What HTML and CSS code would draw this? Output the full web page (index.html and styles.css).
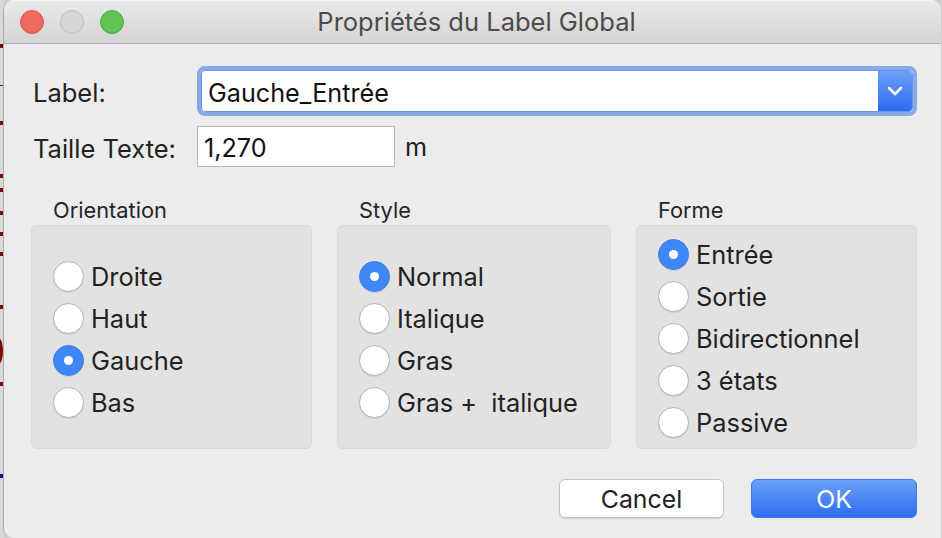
FILE: index.html
```html
<!DOCTYPE html>
<html lang="fr">
<head>
<meta charset="utf-8">
<title>Propriétés du Label Global</title>
<link rel="stylesheet" href="styles.css">
</head>
<body>
<div class="desk">
  <span class="mark m1"></span>
  <span class="hline"></span>
  <span class="mark m2"></span>
  <span class="mark m3"></span>
  <span class="mark m4"></span>
  <span class="mark m5"></span>
  <span class="mark m6"></span>
  <span class="mark m7"></span>
  <span class="mark m8"></span>
  <span class="arc"></span>
  <span class="mark m9"></span>
  <span class="mark blue"></span>
</div>
<div class="window">
  <header class="titlebar">
    <div class="lights">
      <span class="light red"></span>
      <span class="light grey"></span>
      <span class="light green"></span>
    </div>
    <h1 class="title">Propriétés du Label Global</h1>
  </header>
  <main class="content">
    <div class="fields">
      <label class="flabel">Label:</label>
      <div class="combo">
        <div class="combo-inner">
          <span class="combo-text">Gauche_Entrée</span>
          <span class="combo-btn">
            <svg width="16" height="10" viewBox="0 0 16 10"><path d="M2 2 L8 8 L14 2" fill="none" stroke="#fff" stroke-width="2.6" stroke-linecap="round" stroke-linejoin="round"/></svg>
          </span>
        </div>
      </div>
      <label class="flabel">Taille Texte:</label>
      <div class="sizerow">
        <span class="textbox">1,270</span>
        <span class="unit">m</span>
      </div>
    </div>
    <div class="groups">
      <section class="group">
        <h2 class="gtitle">Orientation</h2>
        <div class="gbox">
          <div class="radio"><span class="dot"></span>Droite</div>
          <div class="radio"><span class="dot"></span>Haut</div>
          <div class="radio"><span class="dot on"></span>Gauche</div>
          <div class="radio"><span class="dot"></span>Bas</div>
        </div>
      </section>
      <section class="group">
        <h2 class="gtitle">Style</h2>
        <div class="gbox">
          <div class="radio"><span class="dot on"></span>Normal</div>
          <div class="radio"><span class="dot"></span>Italique</div>
          <div class="radio"><span class="dot"></span>Gras</div>
          <div class="radio"><span class="dot"></span>Gras +&nbsp; italique</div>
        </div>
      </section>
      <section class="group">
        <h2 class="gtitle">Forme</h2>
        <div class="gbox five">
          <div class="radio"><span class="dot on"></span>Entrée</div>
          <div class="radio"><span class="dot"></span>Sortie</div>
          <div class="radio"><span class="dot"></span>Bidirectionnel</div>
          <div class="radio"><span class="dot"></span>3 états</div>
          <div class="radio"><span class="dot"></span>Passive</div>
        </div>
      </section>
    </div>
    <div class="buttons">
      <button class="btn cancel">Cancel</button>
      <button class="btn ok">OK</button>
    </div>
  </main>
</div>
</body>
</html>
```
FILE: styles.css
```css
* { box-sizing: border-box; }
html, body {
  margin: 0;
  padding: 0;
  width: 942px;
  height: 538px;
  overflow: hidden;
}
body {
  background: #cfcfcf;
  font-family: Inter, "Liberation Sans", sans-serif;
  color: #222;
  position: relative;
}
.desk {
  position: absolute;
  left: 0;
  top: 0;
  width: 4px;
  height: 538px;
  background: #d8d8d8;
}
.mark {
  position: absolute;
  left: 0;
  width: 4px;
  height: 4px;
  background: #7c0a0a;
}
.m1 { top: 44px; }
.m2 { top: 121px; }
.m3 { top: 174px; }
.m4 { top: 188px; }
.m5 { top: 211px; }
.m6 { top: 232px; }
.m7 { top: 252px; }
.m8 { top: 305px; }
.m9 { top: 382px; }
.blue { top: 474px; background: #1010a8; }
.hline {
  position: absolute;
  left: 0;
  top: 85px;
  width: 4px;
  height: 1px;
  background: #333;
}
.arc {
  position: absolute;
  left: -6px;
  top: 338px;
  width: 9px;
  height: 26px;
  border: 3px solid #7c0a0a;
  border-radius: 50%;
}
.window {
  margin-left: 3px;
  width: 938px;
  height: 538px;
  background: #ececec;
  border-left: 1px solid #a9a9a9;
  border-radius: 10px 10px 0 10px;
  display: flex;
  flex-direction: column;
  overflow: hidden;
  position: relative;
  z-index: 1;
}
.titlebar {
  height: 44px;
  flex: none;
  background: linear-gradient(#e9e9e9, #d4d4d4);
  border-bottom: 1px solid #b3b3b3;
  border-top: 1px solid #f4f4f4;
  display: flex;
  align-items: center;
  position: relative;
}
.lights {
  display: flex;
  gap: 16px;
  padding-left: 16px;
}
.light {
  width: 24px;
  height: 24px;
  border-radius: 50%;
}
.red { background: #ee6a5f; border: 1px solid #d9544a; }
.grey { background: #d6d6d6; border: 1px solid #bcbcbc; }
.green { background: #5fc454; border: 1px solid #4aa73f; }
.title {
  position: absolute;
  left: 0;
  right: 0;
  top: 0;
  bottom: 0;
  margin: 0;
  display: flex;
  align-items: center;
  justify-content: center;
  font-size: 25.5px;
  font-weight: 400;
  color: #4b4b4b;
  padding: 0 0 1px 8px;
}
.content {
  flex: 1;
  display: flex;
  flex-direction: column;
  padding: 22px 24px 0 26px;
}
.fields {
  display: grid;
  grid-template-columns: 167px 720px;
  row-gap: 10px;
  align-items: center;
}
.flabel {
  font-size: 25.5px;
  color: #222;
  padding: 3px 0 0 3px;
}
.combo {
  height: 50px;
  border: 4px solid #87a8e9;
  border-radius: 8px;
}
.combo-inner {
  height: 100%;
  border: 1px solid #6f92de;
  border-radius: 4px;
  display: flex;
  overflow: hidden;
  background: #fff;
}
.combo-text {
  flex: 1;
  font-size: 25.2px;
  color: #111;
  padding: 4px 0 0 6px;
  display: flex;
  align-items: center;
}
.combo-btn {
  width: 34px;
  background: linear-gradient(#6da0f7, #2a6bf0);
  display: flex;
  align-items: center;
  justify-content: center;
  border-radius: 0 3px 3px 0;
}
.sizerow {
  display: flex;
  align-items: center;
  gap: 10px;
}
.textbox {
  width: 198px;
  height: 41px;
  background: #fff;
  border: 1px solid #b9b9b9;
  font-size: 25.2px;
  color: #111;
  padding: 2px 0 0 6px;
  display: flex;
  align-items: center;
}
.unit {
  font-size: 25.2px;
  color: #222;
}
.groups {
  display: flex;
  gap: 25px;
  margin-top: 30px;
  padding-left: 1px;
}
.group {
  display: flex;
  flex-direction: column;
}
.group:nth-child(1) { width: 282px; }
.group:nth-child(2) { width: 275px; }
.group:nth-child(3) { width: 282px; }
.gtitle {
  margin: 0 0 5px 22px;
  font-size: 21.8px;
  font-weight: 400;
  color: #262626;
  height: 23px;
  line-height: 23px;
  padding-top: 2px;
}
.gbox {
  height: 224px;
  background: #e2e2e2;
  border: 1px solid #d9d9d9;
  border-radius: 6px;
  display: flex;
  flex-direction: column;
  justify-content: center;
  padding: 4px 0 0 21px;
}
.gbox.five { padding-top: 2px; }
.radio {
  height: 42px;
  display: flex;
  align-items: center;
  gap: 7px;
  font-size: 25.4px;
  color: #222;
}
.dot {
  width: 31px;
  height: 31px;
  border-radius: 50%;
  background: #fff;
  border: 1px solid #b4b4b4;
  box-shadow: 0 1px 1px rgba(0,0,0,0.08);
  flex: none;
  position: relative;
}
.dot.on {
  background: #3f86f6;
  border-color: #3a7ff0;
}
.dot.on::after {
  content: "";
  position: absolute;
  left: 10px;
  top: 10px;
  width: 9px;
  height: 9px;
  border-radius: 50%;
  background: #fff;
}
.buttons {
  display: flex;
  justify-content: flex-end;
  gap: 27px;
  margin-top: 30px;
  padding-right: 0;
}
.btn {
  height: 39px;
  font-family: Inter, "Liberation Sans", sans-serif;
  font-size: 24.8px;
  border-radius: 6px;
  padding: 0;
}
.cancel {
  width: 165px;
  background: #fff;
  color: #222;
  border: 1px solid #c4c4c4;
  box-shadow: 0 1px 1px rgba(0,0,0,0.12);
}
.ok {
  width: 166px;
  background: linear-gradient(#6aa0f7, #2c6ef1);
  color: #fff;
  border: 1px solid #3a78ee;
}
```
